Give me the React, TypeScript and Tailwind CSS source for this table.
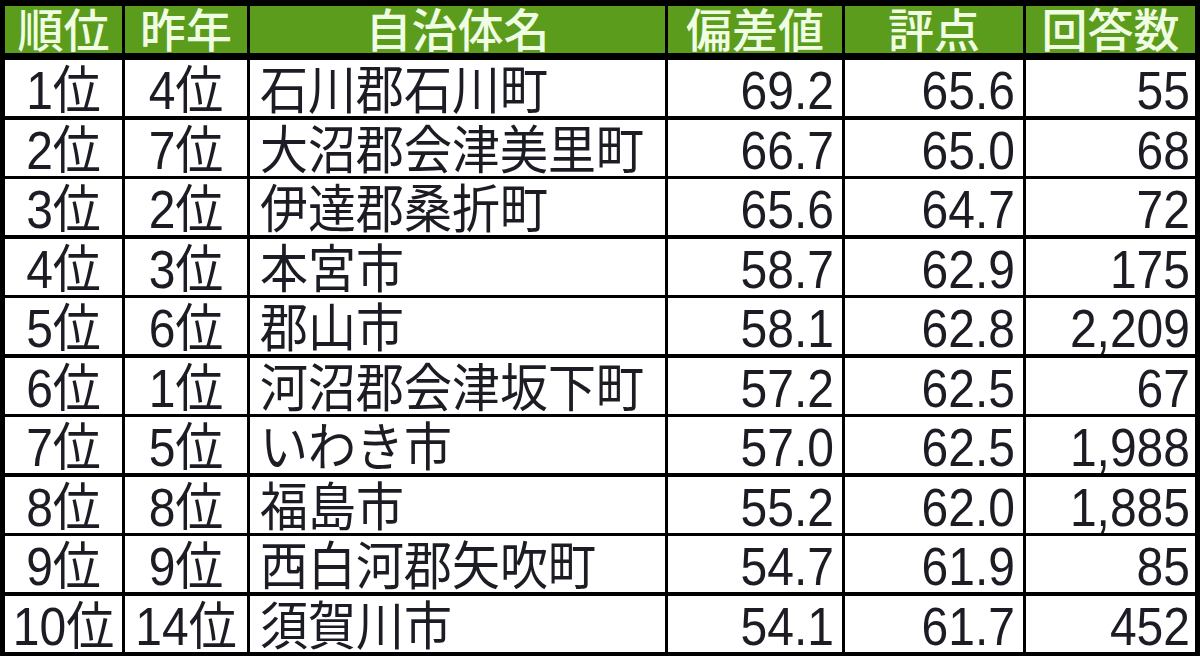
const rows = [
  ["1位", "4位", "石川郡石川町", "69.2", "65.6", "55"],
  ["2位", "7位", "大沼郡会津美里町", "66.7", "65.0", "68"],
  ["3位", "2位", "伊達郡桑折町", "65.6", "64.7", "72"],
  ["4位", "3位", "本宮市", "58.7", "62.9", "175"],
  ["5位", "6位", "郡山市", "58.1", "62.8", "2,209"],
  ["6位", "1位", "河沼郡会津坂下町", "57.2", "62.5", "67"],
  ["7位", "5位", "いわき市", "57.0", "62.5", "1,988"],
  ["8位", "8位", "福島市", "55.2", "62.0", "1,885"],
  ["9位", "9位", "西白河郡矢吹町", "54.7", "61.9", "85"],
  ["10位", "14位", "須賀川市", "54.1", "61.7", "452"],
];

const headers = ["順位", "昨年", "自治体名", "偏差値", "評点", "回答数"];

const cols = "grid grid-cols-[117px_122px_415px_174px_178px_169px] gap-x-[3px]";

const align = (j: number) => {
  if (j < 2) return "justify-center";
  if (j === 2) return "justify-start pl-[10px]";
  if (j === 5) return "justify-end pr-[5px]";
  return "justify-end pr-[8px]";
};

const App = () => {
  return (
    <div
      className="w-[1200px] h-[656px] overflow-hidden bg-black pt-[6px] px-[5px] flex flex-col gap-y-[3.5px]"
      style={{ fontFamily: '"Liberation Sans", "Noto Sans CJK JP", sans-serif' }}
    >
      {/* ヘッダー */}
      <div className={`${cols} h-[47px] mb-[3.5px] shrink-0`}>
        {headers.map((h) => (
          <div
            key={h}
            className="bg-[#5c9c1c] flex items-center justify-center text-[#effde2] text-[46px] leading-[47px] font-medium"
          >
            <span className="inline-block translate-y-[2px]">{h}</span>
          </div>
        ))}
      </div>

      {/* 本体 */}
      {rows.map((r, i) => (
        <div key={i} className={`${cols} h-[56px] shrink-0`}>
          {r.map((c, j) => (
            <div
              key={j}
              className={`bg-white flex items-center text-[48px] leading-[56px] text-[#1c1c24] ${align(j)}`}
            >
              <span className="inline-block scale-y-110 translate-y-[3px] whitespace-nowrap">{c}</span>
            </div>
          ))}
        </div>
      ))}
    </div>
  );
};

export default App;
